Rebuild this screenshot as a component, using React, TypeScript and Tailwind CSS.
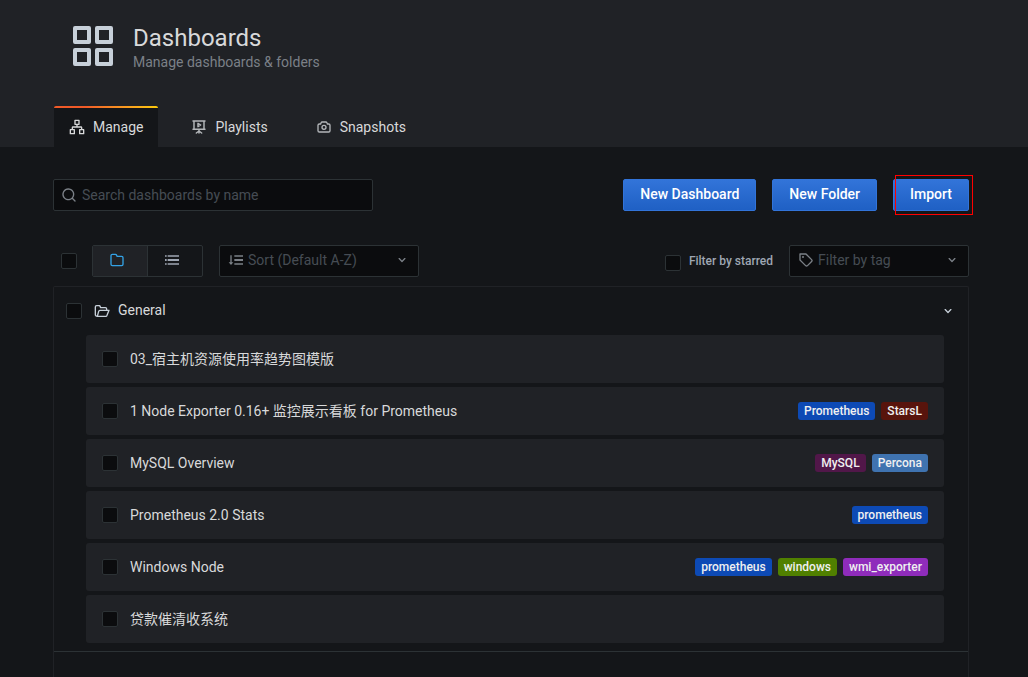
import type { ReactNode } from "react";

type IconProps = { className?: string };

function Glyph({ className = "size-4", children }: IconProps & { children: ReactNode }) {
  return (
    <svg viewBox="0 0 24 24" fill="currentColor" aria-hidden="true" className={`shrink-0 ${className}`}>
      {children}
    </svg>
  );
}

function AppsIcon({ className }: IconProps) {
  return (
    <Glyph className={className}>
      <path d="M10,13H3a1,1,0,0,0-1,1v7a1,1,0,0,0,1,1h7a1,1,0,0,0,1-1V14A1,1,0,0,0,10,13ZM9,20H4V15H9ZM21,2H14a1,1,0,0,0-1,1v7a1,1,0,0,0,1,1h7a1,1,0,0,0,1-1V3A1,1,0,0,0,21,2ZM20,9H15V4h5Zm1,4H14a1,1,0,0,0-1,1v7a1,1,0,0,0,1,1h7a1,1,0,0,0,1-1V14A1,1,0,0,0,21,13Zm-1,7H15V15h5ZM10,2H3A1,1,0,0,0,2,3v7a1,1,0,0,0,1,1h7a1,1,0,0,0,1-1V3A1,1,0,0,0,10,2ZM9,9H4V4H9Z" />
    </Glyph>
  );
}

function SitemapIcon({ className }: IconProps) {
  return (
    <Glyph className={className}>
      <g fill="none" stroke="currentColor" strokeWidth="2" strokeLinejoin="round">
        <path d="M9 2h6v6H9zM2 16h6v6H2zM16 16h6v6h-6zM12 8v4M5 16v-3a1 1 0 0 1 1-1h12a1 1 0 0 1 1 1v3" />
      </g>
    </Glyph>
  );
}

function PresentationIcon({ className }: IconProps) {
  return (
    <Glyph className={className}>
      <g fill="none" stroke="currentColor" strokeWidth="2.2" strokeLinecap="round" strokeLinejoin="round">
        <path d="M3 3h18M4.500 3v12M19.500 3v12M3 15.500h18M12 15.500v5.500M12 18L8 21M12 18l4 3M10.500 6.500v5l4-2.500z" />
      </g>
    </Glyph>
  );
}

function CameraIcon({ className }: IconProps) {
  return (
    <Glyph className={className}>
      <path d="M19,6.5H17.72l-.32-1a3,3,0,0,0-2.84-2H9.44A3,3,0,0,0,6.6,5.55l-.32,1H5a3,3,0,0,0-3,3v8a3,3,0,0,0,3,3H19a3,3,0,0,0,3-3v-8A3,3,0,0,0,19,6.5Zm1,11a1,1,0,0,1-1,1H5a1,1,0,0,1-1-1v-8a1,1,0,0,1,1-1H7a1,1,0,0,0,1-.68l.54-1.64a1,1,0,0,1,.95-.68h5.12a1,1,0,0,1,.95.68l.54,1.64A1,1,0,0,0,17,8.5h2a1,1,0,0,1,1,1Zm-8-9a4,4,0,1,0,4,4A4,4,0,0,0,12,8.5Zm0,6a2,2,0,1,1,2-2A2,2,0,0,1,12,14.5Z" />
    </Glyph>
  );
}

function SearchIcon({ className }: IconProps) {
  return (
    <Glyph className={className}>
      <path d="M21.71,20.29,18,16.61A9,9,0,1,0,16.61,18l3.68,3.68a1,1,0,0,0,1.42,0A1,1,0,0,0,21.71,20.29ZM11,18a7,7,0,1,1,7-7A7,7,0,0,1,11,18Z" />
    </Glyph>
  );
}

function FolderIcon({ className }: IconProps) {
  return (
    <Glyph className={className}>
      <path d="M19,5.5H12.72l-.32-1a3,3,0,0,0-2.84-2H5a3,3,0,0,0-3,3v13a3,3,0,0,0,3,3H19a3,3,0,0,0,3-3V8.5A3,3,0,0,0,19,5.5Zm1,13a1,1,0,0,1-1,1H5a1,1,0,0,1-1-1V5.5a1,1,0,0,1,1-1H9.56a1,1,0,0,1,.95.68l.54,1.64A1,1,0,0,0,12,7.5h7a1,1,0,0,1,1,1Z" />
    </Glyph>
  );
}

function FolderOpenIcon({ className }: IconProps) {
  return (
    <Glyph className={className}>
      <g fill="none" stroke="currentColor" strokeWidth="2" strokeLinejoin="round">
        <path d="M5 20a3 3 0 0 1-3-2V6a2 2 0 0 1 2-2h4.500l1.500 3h7a2 2 0 0 1 2 2v2M5 20h12.500a2 2 0 0 0 2-1.500L22.500 11H9a2 2 0 0 0-2 1.500L5 20z" />
      </g>
    </Glyph>
  );
}

function ListIcon({ className }: IconProps) {
  return (
    <Glyph className={className}>
      <path d="M1.500 5h2.500v2H1.500zM1.500 10.500h2.500v3H1.500zM1.500 17h2.500v2H1.500zM5.500 5h17v2h-17zM5.500 10.500h17v3h-17zM5.500 17h17v2h-17z" />
    </Glyph>
  );
}

function SortIcon({ className }: IconProps) {
  return (
    <Glyph className={className}>
      <path d="M9.500 5h13v2h-13zM9.500 10.500h13v3h-13zM9.500 17h13v2h-13zM3.500 5h2v10.500h2.500L4.500 19.500 1 15.500h2.500z" />
    </Glyph>
  );
}

function TagIcon({ className }: IconProps) {
  return (
    <Glyph className={className}>
      <path d="M7.500,6A1.500,1.500,0,1,0,9,7.500,1.500,1.500,0,0,0,7.500,6Zm13.620,4.710L12.710,2.290A1,1,0,0,0,12,2H3A1,1,0,0,0,2,3v9a1,1,0,0,0,.29.710l8.420,8.410a3,3,0,0,0,4.240,0L21.120,15a3,3,0,0,0,0-4.240Zm-1.410,2.820h0l-6.180,6.170a1,1,0,0,1-1.410,0L4,11.590V4h7.590l8.120,8.120a1,1,0,0,1,.29.710A1,1,0,0,1,19.710,13.530Z" />
    </Glyph>
  );
}

function AngleDownIcon({ className }: IconProps) {
  return (
    <Glyph className={className}>
      <path d="M17,9.170a1,1,0,0,0-1.410,0L12,12.710,8.460,9.170a1,1,0,0,0-1.410,0,1,1,0,0,0,0,1.420l4.240,4.240a1,1,0,0,0,1.420,0L17,10.590A1,1,0,0,0,17,9.170Z" />
    </Glyph>
  );
}

function Checkbox({ id, label }: { id: string; label?: string }) {
  return (
    <input
      id={id}
      type="checkbox"
      aria-label={label}
      className="size-4 shrink-0 appearance-none rounded-xs border border-[#2c3235] bg-[#0b0c0e] checked:bg-[#33a2e5]"
    />
  );
}

const tabs = [
  { label: "Playlists", Icon: PresentationIcon },
  { label: "Snapshots", Icon: CameraIcon },
];

const dashboards = [
  { title: "03_宿主机资源使用率趋势图模版", tags: [] },
  {
    title: "1 Node Exporter 0.16+ 监控展示看板 for Prometheus",
    tags: [
      { name: "Prometheus", color: "bg-[#0d4ab5]" },
      { name: "StarsL", color: "bg-[#58140c]" },
    ],
  },
  {
    title: "MySQL Overview",
    tags: [
      { name: "MySQL", color: "bg-[#511749]" },
      { name: "Percona", color: "bg-[#3f73b0]" },
    ],
  },
  { title: "Prometheus 2.0 Stats", tags: [{ name: "prometheus", color: "bg-[#0d4ab5]" }] },
  {
    title: "Windows Node",
    tags: [
      { name: "prometheus", color: "bg-[#0d4ab5]" },
      { name: "windows", color: "bg-[#508000]" },
      { name: "wmi_exporter", color: "bg-[#8f2cbb]" },
    ],
  },
  { title: "贷款催清收系统", tags: [] },
];

const actionClass =
  "h-8 rounded-xs border border-[#3274d9] bg-linear-to-b from-[#3274d9] to-[#1f60c4] px-4 pb-0.5 text-sm font-medium text-white";

export default function App() {
  return (
    <div className="flex h-screen flex-col overflow-hidden bg-[#141619] font-[Roboto,'Noto_Sans_CJK_SC',sans-serif] text-sm text-[#d8d9da]">
      <header className="bg-[#202226] pr-[59px] pl-[53px]">
        <div className="flex h-[106px] items-start gap-4 pt-[22px] pl-4">
          <AppsIcon className="size-12 text-[#c7d0d9]" />
          <div className="pt-0.5">
            <h1 className="text-2xl leading-7 text-[#d8d9da]">Dashboards</h1>
            <p className="leading-5 text-[#7b8087]">Manage dashboards &amp; folders</p>
          </div>
        </div>
        <nav className="flex h-[41px] gap-4 pl-px">
          <a href="#manage" className="mr-px flex flex-col overflow-hidden rounded-t-xs bg-[#141619]">
            <span className="h-0.5 bg-linear-to-r from-[#f05a28] from-30% to-[#fbca0a]" />
            <span className="flex flex-1 items-center gap-2 px-[15px] pb-px">
              <SitemapIcon />
              Manage
            </span>
          </a>
          {tabs.map(({ label, Icon }) => (
            <a key={label} href={`#${label.toLowerCase()}`} className="flex items-center gap-2 px-4 pt-0.5 pb-px">
              <Icon className="size-4 text-[#b4b7ba]" />
              {label}
            </a>
          ))}
        </nav>
      </header>

      <main className="flex flex-1 flex-col pt-8 pr-[59px] pl-[53px]">
        <div className="flex items-center justify-between gap-4">
          <label className="flex h-8 w-80 items-center gap-[5px] rounded-xs border border-[#2c3235] bg-[#0b0c0e] px-[7px]">
            <SearchIcon className="size-4 text-[#7b8087]" />
            <input
              type="text"
              aria-label="Search dashboards by name"
              placeholder="Search dashboards by name"
              className="min-w-0 flex-1 bg-transparent outline-none placeholder:text-[#464c54]"
            />
          </label>
          <div className="flex gap-4">
            <button type="button" className={actionClass}>New Dashboard</button>
            <button type="button" className={actionClass}>New Folder</button>
            <div className="relative">
              <button type="button" className={actionClass}>Import</button>
              <span className="pointer-events-none absolute -top-1 -right-1 -bottom-1 left-0.5 border border-[#f00]" />
            </div>
          </div>
        </div>

        <div className="mt-[34px] flex h-8 items-center pl-2">
          <Checkbox id="select-all" label="Select all" />
          <div className="ml-[15px] flex h-8 w-[111px] overflow-hidden rounded-xs border border-[#2c3235]">
            <button
              type="button"
              aria-label="View by folders"
              className="flex flex-1 items-center justify-center border-r border-[#2c3235] bg-[#202226] pr-1.5 pb-0.5 text-[#33a2e5]"
            >
              <FolderIcon />
            </button>
            <button
              type="button"
              aria-label="View as list"
              className="flex flex-1 items-center justify-center pr-1.5 pb-0.5 text-[#9fa7b3]"
            >
              <ListIcon />
            </button>
          </div>
          <div className="ml-4 flex h-8 w-50 items-center gap-1 rounded-xs border border-[#2c3235] bg-[#0b0c0e] px-2 pb-0.5 text-[#7b8087]">
            <SortIcon />
            <select aria-label="Sort" className="min-w-0 flex-1 appearance-none bg-transparent text-[#464c54] outline-none">
              <option>Sort (Default A-Z)</option>
            </select>
            <AngleDownIcon />
          </div>
          <div className="ml-auto flex items-center gap-2">
            <span className="flex pt-1">
              <Checkbox id="starred" />
            </span>
            <label htmlFor="starred" className="text-xs font-medium text-[#9fa7b3]">
              Filter by starred
            </label>
          </div>
          <div className="ml-4 flex h-8 w-45 items-center gap-1 rounded-xs border border-[#2c3235] bg-[#0b0c0e] px-2 pb-0.5 text-[#7b8087]">
            <TagIcon />
            <select aria-label="Filter by tag" className="min-w-0 flex-1 appearance-none bg-transparent text-[#464c54] outline-none">
              <option>Filter by tag</option>
            </select>
            <AngleDownIcon />
          </div>
        </div>

        <section className="mt-[9px] flex-1 rounded-t-xs border border-b-0 border-[#202226]">
          <div className="flex h-12 items-center px-3">
            <Checkbox id="folder-general" label="Select General" />
            <button type="button" className="ml-3 flex flex-1 items-center gap-2">
              <FolderOpenIcon className="size-4 text-[#c7d0d9]" />
              <span className="pb-0.5">General</span>
              <AngleDownIcon className="ml-auto size-4 text-[#c7d0d9]" />
            </button>
          </div>
          <ul className="flex flex-col gap-1 border-b border-[#2c3235] pr-6 pb-2 pl-8">
            {dashboards.map(({ title, tags }, index) => (
              <li key={title} className="flex h-12 items-center rounded-[3px] bg-[#202226] px-4">
                <Checkbox id={`dashboard-${index}`} label={title} />
                <a href={`#dashboard-${index}`} className="ml-3 leading-5">{title}</a>
                <div className="ml-auto flex gap-1.5">
                  {tags.map(({ name, color }) => (
                    <span
                      key={name}
                      className={`h-[18px] rounded-[3px] px-1.5 text-xs leading-[18px] font-medium text-[#f0f0f0] ${color}`}
                    >
                      {name}
                    </span>
                  ))}
                </div>
              </li>
            ))}
          </ul>
        </section>
      </main>
    </div>
  );
}
